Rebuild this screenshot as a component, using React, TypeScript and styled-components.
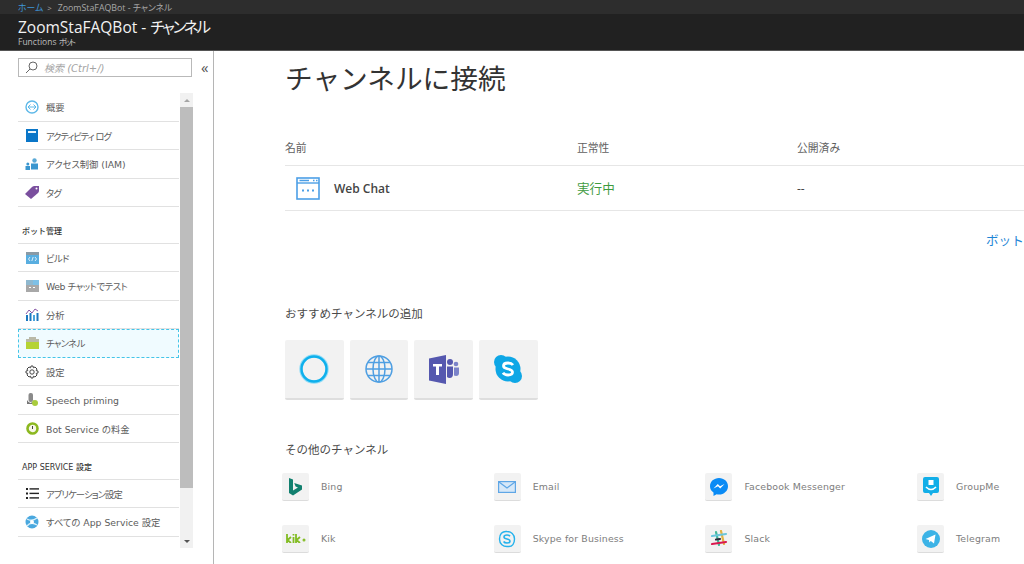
import React from "react"
import styled, { createGlobalStyle } from "styled-components"

const SANS = `"Open Sans", "Noto Sans CJK JP", sans-serif`
const WIDE = `"DejaVu Sans", "Noto Sans CJK JP", sans-serif`

const GlobalStyle = createGlobalStyle`
  html, body {
    margin: 0;
    height: 100%;
    background: #fff;
    overflow: hidden;
  }
  #root { height: 100%; }
  * { box-sizing: border-box; }
`

const Page = styled.div`
  width: 1024px;
  height: 564px;
  display: flex;
  flex-direction: column;
  overflow: hidden;
  font-family: ${SANS};
`

const Breadcrumb = styled.div`
  height: 14px;
  background: #2d2d2d;
  display: flex;
  align-items: center;
  padding-left: 18px;
  font-size: 8.8px;
  font-feature-settings: "palt";
  color: #a8a8a8;
  white-space: nowrap;
`

const HomeLink = styled.span`
  color: #3f96d8;
`

const Chevron = styled.span`
  margin: 0 6px 0 4px;
  font-size: 8px;
`

const TitleBar = styled.div`
  height: 37px;
  background: #212121;
  border-bottom: 1px solid #555;
  padding-left: 18px;
  color: #f2f2f2;
`

const Title = styled.div`
  font-size: 15.5px;
  line-height: 20px;
  margin-top: 3px;
  font-feature-settings: "palt";
  white-space: nowrap;
`

const Subtitle = styled.div`
  font-size: 8.5px;
  line-height: 9px;
  font-feature-settings: "palt";
  color: #bdbdbd;
`

const Kana = styled.span<{ $tight: number }>`
  letter-spacing: ${p => p.$tight}px;
`

const Body = styled.div`
  flex: 1;
  display: flex;
  min-height: 0;
`

const Sidebar = styled.aside`
  width: 214px;
  flex: none;
  border-right: 1px solid #b5b5b5;
  padding: 7px 0 0 18px;
`

const SearchRow = styled.div`
  display: flex;
  align-items: center;
  height: 19px;
`

const SearchBox = styled.div`
  width: 174px;
  height: 19px;
  border: 1px solid #b9b9b9;
  display: flex;
  align-items: center;
  padding-left: 6px;
  gap: 6px;
  font-family: ${WIDE};
  font-size: 10px;
  font-style: italic;
  color: #a3a3a3;
`

const Collapse = styled.span`
  margin-left: 9px;
  font-size: 15px;
  line-height: 15px;
  color: #555;
`

const NavArea = styled.div`
  display: flex;
  margin-top: 16px;
  height: 455px;
`

const NavList = styled.nav`
  width: 161px;
  flex: none;
`

const NavItem = styled.div<{ $selected?: boolean; $tight?: number }>`
  height: 28.5px;
  display: flex;
  align-items: center;
  padding: 1px 0 0 7px;
  gap: 7px;
  font-family: ${WIDE};
  font-size: 9.3px;
  font-feature-settings: "palt";
  letter-spacing: ${p => p.$tight ?? 0}px;
  color: #5c5c5c;
  white-space: nowrap;
  border-bottom: 1px solid #e1e1e1;
  ${p =>
    p.$selected &&
    `
    background: #f0fbff;
    outline: 1px dashed #45c5e8;
    outline-offset: -1px;
    border-bottom-color: transparent;
  `}
`

const SectionLabel = styled.div`
  height: 36.5px;
  display: flex;
  align-items: flex-end;
  padding: 0 0 7px 4px;
  font-family: ${WIDE};
  font-size: 8px;
  font-weight: 500;
  color: #333;
  border-bottom: 1px solid #e1e1e1;
`

const IconSlot = styled.span`
  width: 14px;
  height: 14px;
  flex: none;
  display: flex;
  align-items: center;
  justify-content: center;
`

const Scrollbar = styled.div`
  width: 13px;
  margin-left: 1px;
  background: #f1f1f1;
  display: flex;
  flex-direction: column;
  align-items: center;
`

const ScrollArrow = styled.div<{ $down?: boolean }>`
  height: 14px;
  flex: none;
  display: flex;
  align-items: center;
  justify-content: center;
  margin-top: ${p => (p.$down ? "auto" : "0")};
  &::after {
    content: "";
    border-left: 3px solid transparent;
    border-right: 3px solid transparent;
    ${p => (p.$down ? "border-top: 3px solid #555;" : "border-bottom: 3px solid #a5a5a5;")}
  }
`

const ScrollThumb = styled.div`
  width: 100%;
  height: 381px;
  flex: none;
  background: #bdbdbd;
`

const Main = styled.main`
  flex: 1;
  min-width: 0;
  padding: 9px 0 0 71px;
  overflow: hidden;
`

const Heading = styled.h1`
  margin: 0;
  font-size: 27.7px;
  line-height: 36px;
  font-weight: 400;
  color: #333;
`

const TableHead = styled.div`
  display: grid;
  grid-template-columns: 292px 220px 1fr;
  margin-top: 42px;
  height: 28px;
  padding-bottom: 10px;
  align-items: center;
  border-bottom: 1px solid #e6e6e6;
  font-size: 10.8px;
  color: #5f5f5f;
`

const TableRow = styled.div`
  display: grid;
  grid-template-columns: 292px 220px 1fr;
  height: 45px;
  align-items: center;
  border-bottom: 1px solid #e6e6e6;
  font-size: 12px;
  color: #444;
`

const ChannelName = styled.div`
  display: flex;
  align-items: center;
  gap: 14px;
  padding-left: 11px;
  font-weight: 600;
  font-size: 12px;
`

const Health = styled.span`
  color: #3f9b3f;
  font-size: 12.6px;
  margin-bottom: 2px;
`

const MoreLink = styled.div`
  margin: 22px 0 0 701px;
  font-size: 12.6px;
  line-height: 16px;
  color: #1f86d6;
  white-space: nowrap;
`

const SectionTitle = styled.h2<{ $top: number }>`
  margin: ${p => p.$top}px 0 0;
  font-size: 11.5px;
  line-height: 16px;
  font-weight: 400;
  color: #4a4a4a;
`

const FeaturedRow = styled.div`
  display: flex;
  gap: 6px;
  margin-top: 18px;
`

const Tile = styled.div`
  width: 58.7px;
  height: 60px;
  background: #f2f2f2;
  border-radius: 2px;
  border-bottom: 2px solid #dedede;
  display: flex;
  align-items: center;
  justify-content: center;
`

const OtherGrid = styled.div`
  display: grid;
  grid-template-columns: repeat(4, 211.7px);
  grid-auto-rows: 52px;
  margin: 15px 0 0 -3px;
  width: 900px;
`

const OtherItem = styled.div`
  display: flex;
  align-items: flex-start;
  gap: 12px;
  font-family: ${WIDE};
  font-size: 9.4px;
  line-height: 28px;
  letter-spacing: 0.15px;
  color: #7d7d7d;
  white-space: nowrap;
`

const SmallTile = styled.div`
  width: 27px;
  height: 28px;
  background: #f2f2f2;
  border-radius: 2px;
  border-bottom: 1px solid #dcdcdc;
  display: flex;
  align-items: center;
  justify-content: center;
`

const SearchIcon = () => (
  <svg width="13" height="13" viewBox="0 0 13 13" fill="none" stroke="#666" strokeWidth="1">
    <circle cx="8" cy="5" r="4" />
    <path d="M5 8 L1 12" />
  </svg>
)

const navIcons: Record<string, React.ReactNode> = {
  overview: (
    <svg width="14" height="14" viewBox="0 0 14 14" fill="none" stroke="#5db8e8">
      <circle cx="7" cy="7" r="6" strokeWidth="1.4" />
      <path d="M5.5 4.5 L3 7 L5.5 9.5 M8.5 4.5 L11 7 L8.5 9.5 M3 7 H11" strokeWidth="1" />
    </svg>
  ),
  log: (
    <svg width="12" height="13" viewBox="0 0 12 13">
      <rect width="12" height="13" fill="#0a76c8" />
      <rect x="2" y="2" width="8" height="2" fill="#e8f4fc" />
    </svg>
  ),
  iam: (
    <svg width="14" height="13" viewBox="0 0 14 13" fill="#3a96cf">
      <circle cx="9.5" cy="2.5" r="2.2" fill="#5aa9d6" />
      <rect x="6" y="5.5" width="7" height="6" />
      <circle cx="2.8" cy="6" r="1.5" />
      <rect x="0.5" y="8" width="4.5" height="4" />
    </svg>
  ),
  tag: (
    <svg width="14" height="13" viewBox="0 0 14 13">
      <path d="M0 8 L7 1 Q8 0 9.5 0 H14 V4.5 Q14 6 13 7 L6 13 Z" fill="#7a4f9e" />
      <circle cx="11.5" cy="2.5" r="1" fill="#fff" />
    </svg>
  ),
  build: (
    <svg width="13" height="12" viewBox="0 0 13 12">
      <rect width="13" height="12" fill="#59aee0" />
      <rect y="0" width="13" height="3" fill="#8a9aa5" />
      <path d="M4 5 L2.5 7 L4 9 M9 5 L10.5 7 L9 9 M7.2 5 L5.8 9" stroke="#fff" strokeWidth="0.8" fill="none" />
    </svg>
  ),
  webtest: (
    <svg width="13" height="12" viewBox="0 0 13 12">
      <rect width="13" height="12" fill="#a8a8a8" />
      <rect x="7" width="6" height="5" fill="#7ec0e6" />
      <rect width="7" height="5" fill="#8fb8cf" />
      <rect x="3" y="7" width="2" height="1" fill="#fff" />
      <rect x="7" y="7" width="2" height="1" fill="#fff" />
    </svg>
  ),
  analytics: (
    <svg width="14" height="13" viewBox="0 0 14 13">
      <path d="M1 6 L4 2 L7 5 L10 1 L13 3" stroke="#8a5aa8" strokeWidth="1" fill="none" />
      <rect x="1" y="7" width="2" height="6" fill="#1c78bf" />
      <rect x="4.5" y="5" width="2" height="8" fill="#1c78bf" />
      <rect x="8" y="7" width="2" height="6" fill="#4aa5dc" />
      <rect x="11.5" y="5" width="2" height="8" fill="#1c78bf" />
    </svg>
  ),
  channel: (
    <svg width="13" height="12" viewBox="0 0 13 12">
      <path d="M3 0 H10 V2 H13 V5 H0 V2 H3 Z" fill="#b9b9a8" />
      <rect y="5" width="13" height="7" fill="#b5d334" />
    </svg>
  ),
  settings: (
    <svg width="14" height="14" viewBox="0 0 14 14" fill="none" stroke="#444" strokeWidth="1">
      <circle cx="7" cy="7" r="2.2" />
      <path d="M6 1 H8 L8.4 2.8 L10 2 L12 4 L11.2 5.6 L13 6 V8 L11.2 8.4 L12 10 L10 12 L8.4 11.2 L8 13 H6 L5.6 11.2 L4 12 L2 10 L2.8 8.4 L1 8 V6 L2.8 5.6 L2 4 L4 2 L5.6 2.8 Z" />
    </svg>
  ),
  speech: (
    <svg width="13" height="14" viewBox="0 0 13 14">
      <rect x="2.5" y="0" width="4.5" height="9" rx="2" fill="#8a8a8a" />
      <path d="M1 7 Q4.5 13 8 7 V11 H1 Z" fill="#777" />
      <circle cx="9" cy="10" r="3" fill="#a9cc3d" />
    </svg>
  ),
  pricing: (
    <svg width="13" height="13" viewBox="0 0 13 13">
      <circle cx="6.5" cy="6.5" r="5" fill="#f7f7e8" stroke="#8cb820" strokeWidth="2.6" />
      <path d="M6.5 4 V7" stroke="#444" strokeWidth="1" />
    </svg>
  ),
  appsettings: (
    <svg width="13" height="11" viewBox="0 0 13 11" fill="#222">
      <rect y="0" width="2" height="2" />
      <rect x="3.5" y="0.2" width="9.5" height="1.4" />
      <rect y="4.5" width="2" height="2" />
      <rect x="3.5" y="4.7" width="9.5" height="1.4" />
      <rect y="9" width="2" height="2" />
      <rect x="3.5" y="9.2" width="9.5" height="1.4" />
    </svg>
  ),
  appservice: (
    <svg width="14" height="14" viewBox="0 0 14 14">
      <circle cx="7" cy="7" r="6.5" fill="#4aa8df" />
      <path d="M2 4 Q7 7 12 3 M2 11 Q6 6 12 10" stroke="#d8f0fb" strokeWidth="1.4" fill="none" />
      <circle cx="7" cy="7" r="2" fill="#fff" />
    </svg>
  ),
}

const CortanaIcon = () => (
  <svg width="32" height="32" viewBox="0 0 32 32" fill="none">
    <circle cx="16" cy="16" r="13" stroke="#8fdcf7" strokeWidth="3.4" />
    <circle cx="16" cy="16" r="12.5" stroke="#0fb0ec" strokeWidth="2.4" />
  </svg>
)

const GlobeIcon = () => (
  <svg width="30" height="30" viewBox="0 0 30 30" fill="none" stroke="#4f9fe2" strokeWidth="1.5">
    <circle cx="15" cy="15" r="13" />
    <ellipse cx="15" cy="15" rx="6" ry="13" />
    <path d="M15 2 V28 M2 15 H28 M4 8.5 H26 M4 21.5 H26" />
  </svg>
)

const TeamsIcon = () => (
  <svg width="30" height="29" viewBox="0 0 30 29">
    <path d="M0 3.5 L17 0 V29 L0 25.5 Z" fill="#5558af" />
    <path d="M4 9 H13 V11.5 H10 V20 H7 V11.5 H4 Z" fill="#fff" />
    <circle cx="21" cy="7" r="3" fill="#5558af" />
    <circle cx="27" cy="9" r="2.3" fill="#7b83c9" />
    <path d="M18 11.5 H24 V19 Q24 23 20.5 23 Q19 23 18 22 Z" fill="#5558af" />
    <path d="M25 12.5 H30 V18 Q30 21 27 21 L25 20.5 Z" fill="#7b83c9" />
  </svg>
)

const SkypeIcon = () => (
  <svg width="30" height="30" viewBox="0 0 30 30">
    <circle cx="15" cy="15" r="12.5" fill="#0ea7e6" />
    <circle cx="8" cy="8" r="7" fill="#0ea7e6" />
    <circle cx="22" cy="22" r="7" fill="#0ea7e6" />
    <path
      d="M20 11 Q18.5 9 15 9 Q10.5 9 10.5 12 Q10.5 14 15 15 Q19.5 16 19.5 18 Q19.5 21 15 21 Q11.5 21 10 18.8"
      stroke="#fff"
      strokeWidth="2.8"
      fill="none"
    />
  </svg>
)

const otherChannels: { name: string; icon: React.ReactNode }[] = [
  {
    name: "Bing",
    icon: (
      <svg width="14" height="18" viewBox="0 0 14 18">
        <path d="M0 0 L4 1.4 V12.5 L9 9.6 L6.6 8.5 L5.2 5 L13 7.6 V11.6 L4 17.5 L0 15 Z" fill="#12806f" />
      </svg>
    ),
  },
  {
    name: "Email",
    icon: (
      <svg width="18" height="12" viewBox="0 0 18 12" fill="#d6e8f8" stroke="#5ea6e6" strokeWidth="1.2">
        <rect x="0.6" y="0.6" width="16.8" height="10.8" />
        <path d="M1 1 L9 7 L17 1" fill="none" />
      </svg>
    ),
  },
  {
    name: "Facebook Messenger",
    icon: (
      <svg width="18" height="18" viewBox="0 0 18 18">
        <path d="M9 0 C4 0 0 3.6 0 8.2 C0 11 1.4 13 3.5 14.5 V18 L6.6 16.2 C7.4 16.4 8.2 16.5 9 16.5 C14 16.5 18 12.8 18 8.2 C18 3.6 14 0 9 0 Z" fill="#0a8bf5" />
        <path d="M3.5 10.5 L7.8 6 L10 8.2 L14.5 6 L10.2 10.5 L8 8.3 Z" fill="#fff" />
      </svg>
    ),
  },
  {
    name: "GroupMe",
    icon: (
      <svg width="16" height="19" viewBox="0 0 16 19">
        <path d="M2 0 H14 Q16 0 16 2 V14 Q16 16 14 16 H10 L8 19 L6 16 H2 Q0 16 0 14 V2 Q0 0 2 0 Z" fill="#12aee8" />
        <rect x="5.5" y="3" width="5" height="5" fill="#fff" />
        <path d="M3 10 Q8 15 13 10" stroke="#fff" strokeWidth="1.6" fill="none" />
      </svg>
    ),
  },
  {
    name: "Kik",
    icon: (
      <svg width="20" height="9" viewBox="0 0 20 9" stroke="#82bc23" strokeWidth="1.8" fill="none">
        <path d="M1 0 V9 M5 3 L1.5 6 L5 9 M7.5 3 V9 M7.5 0 V1.6 M10 0 V9 M14 3 L10.5 6 L14 9" />
        <circle cx="18" cy="6" r="0.6" />
      </svg>
    ),
  },
  {
    name: "Skype for Business",
    icon: (
      <svg width="18" height="18" viewBox="0 0 18 18" fill="none">
        <path
          d="M9 1.5 C13 1.5 16.5 4.5 16.5 9 C16.5 13.5 14.5 17 10 16.5 C5 17 1.5 14 1.5 9 C1.5 4 4 1 9 1.5 Z"
          stroke="#25b2ec"
          strokeWidth="1.4"
        />
        <path
          d="M12 6.3 Q11 5 9 5 Q6 5 6 7 Q6 8.4 9 9 Q12 9.6 12 11 Q12 13 9 13 Q6.5 13 5.6 11.5"
          stroke="#25b2ec"
          strokeWidth="1.6"
        />
      </svg>
    ),
  },
  {
    name: "Slack",
    icon: (
      <svg width="18" height="18" viewBox="0 0 18 18" strokeWidth="2.2" strokeLinecap="round">
        <path d="M6 2 L9 15" stroke="#44b89a" />
        <path d="M11 1 L14 14" stroke="#e3b342" />
        <path d="M2 6 L16 4" stroke="#6bc6dc" />
        <path d="M2 14 L16 12" stroke="#d9184f" />
        <path d="M6 9.5 L10 9" stroke="#2c2c3c" />
      </svg>
    ),
  },
  {
    name: "Telegram",
    icon: (
      <svg width="18" height="18" viewBox="0 0 18 18">
        <circle cx="9" cy="9" r="9" fill="#3cb3e6" />
        <path d="M3.5 9 L13.5 4.5 L12 13.5 L8.8 11 L7.3 12.5 L7 10 Z" fill="#fff" />
      </svg>
    ),
  },
]

const nav = (icon: string, label: string, tight?: number, selected?: boolean) => (
  <NavItem $selected={selected} $tight={tight}>
    <IconSlot>{navIcons[icon]}</IconSlot>
    {label}
  </NavItem>
)

export default function App() {
  return (
    <Page>
      <GlobalStyle />
      <Breadcrumb>
        <HomeLink>ホーム</HomeLink>
        <Chevron>&gt;</Chevron>
        ZoomStaFAQBot - チャンネル
      </Breadcrumb>
      <TitleBar>
        <Title>
          ZoomStaFAQBot - <Kana $tight={-2.2}>チャンネル</Kana>
        </Title>
        <Subtitle>
          Functions <Kana $tight={-2}>ボット</Kana>
        </Subtitle>
      </TitleBar>
      <Body>
        <Sidebar>
          <SearchRow>
            <SearchBox>
              <SearchIcon />
              検索 (Ctrl+/)
            </SearchBox>
            <Collapse>«</Collapse>
          </SearchRow>
          <NavArea>
            <NavList>
              {nav("overview", "概要")}
              {nav("log", "アクティビティ ログ", -1.1)}
              {nav("iam", "アクセス制御 (IAM)")}
              {nav("tag", "タグ", -0.8)}
              <SectionLabel>ボット管理</SectionLabel>
              {nav("build", "ビルド", -0.6)}
              {nav("webtest", "Web チャットでテスト", -0.4)}
              {nav("analytics", "分析")}
              {nav("channel", "チャンネル", -0.6, true)}
              {nav("settings", "設定")}
              {nav("speech", "Speech priming")}
              {nav("pricing", "Bot Service の料金")}
              <SectionLabel>APP SERVICE 設定</SectionLabel>
              {nav("appsettings", "アプリケーション設定", -0.9)}
              {nav("appservice", "すべての App Service 設定")}
            </NavList>
            <Scrollbar>
              <ScrollArrow />
              <ScrollThumb />
              <ScrollArrow $down />
            </Scrollbar>
          </NavArea>
        </Sidebar>
        <Main>
          <Heading>チャンネルに接続</Heading>
          <TableHead>
            <span>名前</span>
            <span>正常性</span>
            <span>公開済み</span>
          </TableHead>
          <TableRow>
            <ChannelName>
              <svg width="24" height="23" viewBox="0 0 24 23" fill="none">
                <rect x="1" y="1" width="22" height="21" fill="#fff" stroke="#4c9fe6" strokeWidth="1.6" />
                <path d="M1 6 H23" stroke="#4c9fe6" strokeWidth="1.4" />
                <path d="M3.5 3.5 H13 M17 3.5 H18.5 M20 3.5 H21.5" stroke="#4c9fe6" strokeWidth="1.3" />
                <path d="M6 13.5 H8 M11 13.5 H13 M16 13.5 H18" stroke="#4c9fe6" strokeWidth="2" />
              </svg>
              Web Chat
            </ChannelName>
            <Health>実行中</Health>
            <span>--</span>
          </TableRow>
          <MoreLink>ボット</MoreLink>
          <SectionTitle $top={57}>おすすめチャンネルの追加</SectionTitle>
          <FeaturedRow>
            <Tile>
              <CortanaIcon />
            </Tile>
            <Tile>
              <GlobeIcon />
            </Tile>
            <Tile>
              <TeamsIcon />
            </Tile>
            <Tile>
              <SkypeIcon />
            </Tile>
          </FeaturedRow>
          <SectionTitle $top={42}>その他のチャンネル</SectionTitle>
          <OtherGrid>
            {otherChannels.map(c => (
              <OtherItem key={c.name}>
                <SmallTile>{c.icon}</SmallTile>
                {c.name}
              </OtherItem>
            ))}
          </OtherGrid>
        </Main>
      </Body>
    </Page>
  )
}
